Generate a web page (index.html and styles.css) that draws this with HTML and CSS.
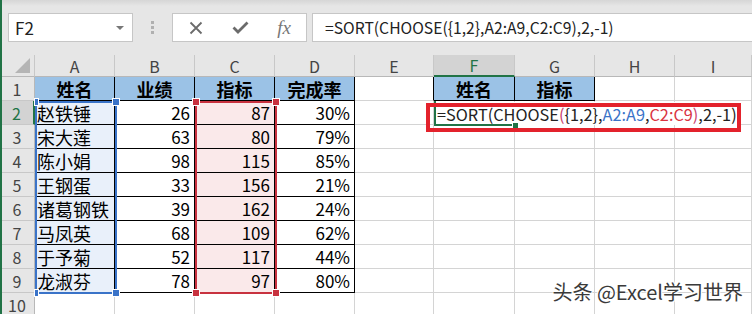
FILE: index.html
```html
<!DOCTYPE html>
<html lang="zh-CN">
<head>
    <meta charset="UTF-8">
    <title>SORT CHOOSE</title>
    <link rel="stylesheet" href="styles.css">
</head>
<body>
<div class="app">
    <div class="formula-bar">
        <div class="name-box"><span>F2</span><span class="caret"></span></div>
        <div class="grip"><i></i><i></i><i></i></div>
        <div class="fx-buttons">
            <svg width="14" height="14" viewBox="0 0 14 14"><path d="M1.5 1.5 L12.5 12.5 M12.5 1.5 L1.5 12.5" stroke="#6b6b6b" stroke-width="1.8" fill="none"/></svg>
            <svg width="17" height="13" viewBox="0 0 17 13"><path d="M1.5 6.5 L6 11 L15.5 1.5" stroke="#6b6b6b" stroke-width="2.8" fill="none"/></svg>
            <span class="fx">fx</span>
        </div>
        <div class="formula-input">=SORT(CHOOSE({1,2},A2:A9,C2:C9),2,-1)</div>
    </div>

    <div class="sheet">
        <div class="grid">
            <!-- column headers -->
            <div class="hdr corner"><span class="tri"></span></div>
            <div class="hdr">A</div><div class="hdr">B</div><div class="hdr">C</div><div class="hdr">D</div>
            <div class="hdr">E</div><div class="hdr active-col">F</div><div class="hdr">G</div><div class="hdr">H</div><div class="hdr">I</div>

            <div class="rh">1</div>
            <div class="cell t th">姓名</div><div class="cell t th">业绩</div><div class="cell t th">指标</div><div class="cell t th">完成率</div>
            <div class="cell edge"></div><div class="cell t th">姓名</div><div class="cell t th">指标</div><div class="cell"></div><div class="cell"></div>

            <div class="rh active-row">2</div>
            <div class="cell t name">赵铁锤</div><div class="cell t num">26</div><div class="cell t num pink">87</div><div class="cell t num">30%</div>
            <div class="cell"></div><div class="cell"></div><div class="cell"></div><div class="cell"></div><div class="cell"></div>

            <div class="rh">3</div>
            <div class="cell t name">宋大莲</div><div class="cell t num">63</div><div class="cell t num pink">80</div><div class="cell t num">79%</div>
            <div class="cell"></div><div class="cell"></div><div class="cell"></div><div class="cell"></div><div class="cell"></div>

            <div class="rh">4</div>
            <div class="cell t name">陈小娟</div><div class="cell t num">98</div><div class="cell t num pink">115</div><div class="cell t num">85%</div>
            <div class="cell"></div><div class="cell"></div><div class="cell"></div><div class="cell"></div><div class="cell"></div>

            <div class="rh">5</div>
            <div class="cell t name">王钢蛋</div><div class="cell t num">33</div><div class="cell t num pink">156</div><div class="cell t num">21%</div>
            <div class="cell"></div><div class="cell"></div><div class="cell"></div><div class="cell"></div><div class="cell"></div>

            <div class="rh">6</div>
            <div class="cell t name">诸葛钢铁</div><div class="cell t num">39</div><div class="cell t num pink">162</div><div class="cell t num">24%</div>
            <div class="cell"></div><div class="cell"></div><div class="cell"></div><div class="cell"></div><div class="cell"></div>

            <div class="rh">7</div>
            <div class="cell t name">马凤英</div><div class="cell t num">68</div><div class="cell t num pink">109</div><div class="cell t num">62%</div>
            <div class="cell"></div><div class="cell"></div><div class="cell"></div><div class="cell"></div><div class="cell"></div>

            <div class="rh">8</div>
            <div class="cell t name">于予菊</div><div class="cell t num">52</div><div class="cell t num pink">117</div><div class="cell t num">44%</div>
            <div class="cell"></div><div class="cell"></div><div class="cell"></div><div class="cell"></div><div class="cell"></div>

            <div class="rh">9</div>
            <div class="cell t name">龙淑芬</div><div class="cell t num">78</div><div class="cell t num pink">97</div><div class="cell t num">80%</div>
            <div class="cell"></div><div class="cell"></div><div class="cell"></div><div class="cell"></div><div class="cell"></div>

            <div class="rh">10</div>
            <div class="cell"></div><div class="cell"></div><div class="cell"></div><div class="cell"></div>
            <div class="cell"></div><div class="cell"></div><div class="cell"></div><div class="cell"></div><div class="cell"></div>
        </div>

        <!-- range highlights drawn over the grid -->
        <div class="range range-blue"><i class="h tl"></i><i class="h tr"></i><i class="h bl"></i><i class="h br"></i></div>
        <div class="range range-red"><i class="h tl"></i><i class="h tr"></i><i class="h bl"></i><i class="h br"></i></div>

        <div class="editor">=SORT(CHOOSE<span class="paren">(</span>{1,2},<span class="ref-a">A2:A9</span>,<span class="ref-c">C2:C9</span><span class="paren">)</span>,2,-1)<span class="cursor"></span></div>
        <div class="active-cell"><i class="fill"></i></div>
        <div class="callout"></div>
    </div>

    <div class="watermark">头条 @Excel学习世界</div>
</div>
</body>
</html>
```

FILE: styles.css
```css
body {
    margin: 0;
    background: #fff;
    font-family: "Noto Sans CJK SC", "Noto Sans", sans-serif;
}
.app {
    position: relative;
    width: 752px;
    height: 314px;
    overflow: hidden;
}
.app::before {
    content: "";
    position: absolute;
    left: 0;
    top: 0;
    bottom: 0;
    width: 2px;
    background: #217346;
    z-index: 10;
}

/* formula bar */
.formula-bar {
    display: flex;
    height: 29px;
    padding: 13px 0 13px 8px;
    background: linear-gradient(#d6d6d6, #e6e6e6 6px);
}
.name-box {
    width: 125px;
    box-sizing: border-box;
    background: #fff;
    border: 1px solid #c6c6c6;
    display: flex;
    align-items: center;
    justify-content: space-between;
    padding: 0 8px 0 6px;
    font-size: 17px;
    color: #222;
}
.caret {
    width: 0;
    height: 0;
    border-left: 4px solid transparent;
    border-right: 4px solid transparent;
    border-top: 4px solid #777;
}
.grip {
    width: 39px;
    display: flex;
    flex-direction: column;
    align-items: center;
    justify-content: center;
    gap: 2px;
}
.grip i {
    width: 3px;
    height: 3px;
    background: #b0b0b0;
}
.fx-buttons {
    width: 135px;
    box-sizing: border-box;
    background: #fff;
    border: 1px solid #c6c6c6;
    display: flex;
    align-items: center;
    justify-content: space-between;
    padding: 0 15px 0 16px;
}
.fx {
    font-family: "Liberation Serif", serif;
    font-style: italic;
    font-size: 19px;
    color: #777;
    line-height: 1;
}
.formula-input {
    flex: 1;
    margin-left: 5px;
    background: #fff;
    border: 1px solid #c6c6c6;
    border-right: none;
    display: flex;
    align-items: center;
    padding-left: 12px;
    font-size: 15.7px;
    color: #222;
    white-space: nowrap;
}

/* sheet grid */
.sheet {
    position: relative;
}
.grid {
    display: grid;
    grid-template-columns: 35px 80px 80px 80px 80px 79px 81px 80px 80px 77px;
    grid-template-rows: 22px repeat(10, 24px);
}
.grid > div {
    box-sizing: border-box;
    display: flex;
    align-items: center;
    white-space: nowrap;
}
.hdr {
    background: #e6e6e6;
    border-right: 1px solid #c8c8c8;
    border-bottom: 1px solid #b8b8b8;
    justify-content: center;
    font-size: 16px;
    color: #444;
}
.corner {
    position: relative;
}
.tri {
    position: absolute;
    right: 4px;
    bottom: 3px;
    width: 15px;
    height: 15px;
    background: #b5b5b5;
    clip-path: polygon(100% 0, 100% 100%, 0 100%);
}
.active-col {
    background: #d3d3d3;
    color: #217346;
    border-bottom: 2px solid #217346;
}
.rh {
    background: #e6e6e6;
    border-right: 1px solid #b8b8b8;
    border-bottom: 1px solid #c8c8c8;
    justify-content: center;
    font-size: 16px;
    color: #444;
}
.active-row {
    background: #d3d3d3;
    color: #217346;
    border-right: 2px solid #217346;
}
.cell {
    border-right: 1px solid #d4d4d4;
    border-bottom: 1px solid #d4d4d4;
    font-size: 18px;
    color: #000;
}
.cell.edge {
    border-right-color: #000;
}
.cell.t {
    border-right: 1px solid #000;
    border-bottom: 1px solid #000;
}
.th {
    background: #9bc2e6;
    font-weight: bold;
    justify-content: center;
}
.name {
    background: #e9f0fa;
    padding-left: 2px;
}
.num {
    justify-content: flex-end;
    padding-right: 4px;
    font-size: 17px;
}
.pink {
    background: #fae9ea;
}

/* range highlights */
.range {
    position: absolute;
    top: 46px;
    height: 193px;
    box-sizing: border-box;
    border: 2px solid;
}
.range-blue {
    left: 35px;
    width: 82px;
    border-color: #3a73c8;
}
.range-red {
    left: 195px;
    width: 82px;
    border-color: #c8323f;
}
.h {
    position: absolute;
    width: 6px;
    height: 6px;
}
.range-blue .h { background: #3a73c8; box-shadow: 0 0 0 1px #fff; }
.range-red .h { background: #c8323f; box-shadow: 0 0 0 1px #fff; }
.tl { left: -4px; top: -4px; }
.tr { right: -4px; top: -4px; }
.bl { left: -4px; bottom: -4px; }
.br { right: -4px; bottom: -4px; }
.range-blue .tl, .range-blue .bl { left: -2px; width: 3px; }

/* cell being edited */
.editor {
    position: absolute;
    left: 436px;
    top: 47px;
    width: 301px;
    height: 23px;
    background: #fff;
    display: flex;
    align-items: center;
    padding-left: 1px;
    font-size: 16.3px;
    color: #222;
    white-space: nowrap;
    z-index: 2;
}
.paren { color: #c9406b; }
.ref-a { color: #3a73c8; }
.ref-c { color: #d9333f; }
.cursor {
    display: inline-block;
    width: 1px;
    height: 18px;
    background: #000;
    margin-left: 2px;
}
.active-cell {
    position: absolute;
    left: 434px;
    top: 46px;
    width: 81px;
    height: 25px;
    box-sizing: border-box;
    border-left: 2px solid #217346;
    border-bottom: 2px solid #217346;
    z-index: 3;
}
.fill {
    position: absolute;
    right: -3px;
    bottom: -4px;
    width: 5px;
    height: 5px;
    background: #217346;
    box-shadow: 0 0 0 1px #fff;
}
.callout {
    position: absolute;
    left: 426px;
    top: 48px;
    width: 315px;
    height: 29px;
    box-sizing: border-box;
    border: 4px solid #e3222c;
    z-index: 4;
}

.watermark {
    position: absolute;
    right: 9px;
    bottom: 8px;
    font-size: 20px;
    color: #3a3a3a;
    text-shadow: 1px 1px 0 #fff, -1px -1px 0 #fff, 1px -1px 0 #fff, -1px 1px 0 #fff;
    z-index: 5;
}
```
